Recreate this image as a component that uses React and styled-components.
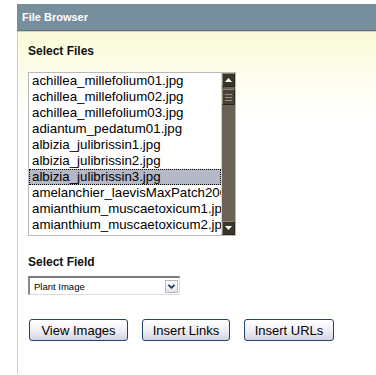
import React from "react"
import styled, { createGlobalStyle } from "styled-components"

const GlobalStyle = createGlobalStyle`
  html, body {
    margin: 0;
    padding: 0;
    background: #ffffff;
    font-family: "Liberation Sans", Arial, sans-serif;
  }
`

const Page = styled.div`
  padding: 4px 0 0 17px;
`

const Header = styled.div`
  height: 26px;
  line-height: 27px;
  padding-left: 5px;
  background: #778e9c;
  border-bottom: 1px solid #5f7380;
  color: #ffffff;
  font-size: 11px;
  font-weight: bold;
`

const Body = styled.div`
  min-height: 343px;
  box-sizing: border-box;
  border-left: 1px solid #d2ceb6;
  border-top: 1px solid #d4d0b4;
  padding: 12px 10px 0 10px;
  background: linear-gradient(to bottom, #fafad7 0, #fdfdee 45px, #ffffff 90px);
`

const Label = styled.div`
  font-size: 12px;
  line-height: 14px;
  font-weight: bold;
  color: #111111;
  margin-top: ${(p) => p.$top || 0}px;
`

const ListBox = styled.div`
  display: flex;
  width: 208px;
  height: 164px;
  box-sizing: border-box;
  margin-top: 14px;
  border: 1px solid #b9b9b9;
  background: #ffffff;
`

const Rows = styled.div`
  flex: 1;
  overflow: hidden;
`

const Row = styled.div`
  height: 16px;
  line-height: 16px;
  padding-left: 3px;
  font-size: 13.3px;
  color: #000000;
  white-space: nowrap;
  box-sizing: border-box;
  background: ${(p) => (p.$selected ? "#b5b8c6" : "transparent")};
  outline: ${(p) => (p.$selected ? "1px dotted #000" : "none")};
  outline-offset: -1px;
`

const ScrollBar = styled.div`
  width: 13px;
  display: flex;
  flex-direction: column;
  background: #6a6254;
  border-left: 1px solid #d8d4c8;
`

const ArrowButton = styled.div`
  height: 14px;
  display: flex;
  align-items: center;
  justify-content: center;
  background: #3b3429;
  border: 1px solid #8c8474;
  border-right-color: #2a251d;
  border-bottom-color: #2a251d;
  box-sizing: border-box;
`

const Thumb = styled.div`
  height: 16px;
  margin-top: 2px;
  box-sizing: border-box;
  background: #4a4236;
  border: 1px solid #8c8474;
  border-right-color: #2a251d;
  border-bottom-color: #2a251d;
  display: flex;
  flex-direction: column;
  justify-content: center;
  gap: 2px;
  padding: 0 2px;
`

const Grip = styled.div`
  height: 1px;
  background: #9a9282;
`

const Track = styled.div`
  flex: 1;
`

const SelectBox = styled.div`
  display: flex;
  align-items: center;
  width: 152px;
  height: 19px;
  box-sizing: border-box;
  margin-top: 7px;
  border-top: 2px solid #7a7a7a;
  border-left: 2px solid #8a8a8a;
  border-right: 1px solid #dcdcdc;
  border-bottom: 1px solid #dcdcdc;
  background: #ffffff;
`

const SelectText = styled.div`
  flex: 1;
  padding-left: 4px;
  font-size: 9.5px;
  color: #000000;
`

const DropButton = styled.div`
  width: 13px;
  height: 13px;
  margin-right: 1px;
  box-sizing: border-box;
  display: flex;
  align-items: center;
  justify-content: center;
  background: linear-gradient(to bottom, #ffffff, #e2e2e8);
  border: 1px solid #b8b8c4;
`

const Buttons = styled.div`
  display: flex;
  gap: 14px;
  margin-top: 24px;
  padding-left: 1px;
`

const Button = styled.button`
  width: ${(p) => p.$w}px;
  height: 22px;
  padding: 0;
  border: 1px solid #22436f;
  border-radius: 3px;
  background: linear-gradient(to bottom, #ffffff 0%, #f2f2f6 45%, #d3d3e3 100%);
  font-family: "Liberation Sans", Arial, sans-serif;
  font-size: 13px;
  color: #000000;
  cursor: pointer;
`

const files = [
  "achillea_millefolium01.jpg",
  "achillea_millefolium02.jpg",
  "achillea_millefolium03.jpg",
  "adiantum_pedatum01.jpg",
  "albizia_julibrissin1.jpg",
  "albizia_julibrissin2.jpg",
  "albizia_julibrissin3.jpg",
  "amelanchier_laevisMaxPatch2002.jpg",
  "amianthium_muscaetoxicum1.jpg",
  "amianthium_muscaetoxicum2.jpg",
]

const App = () => {
  return (
    <>
      <GlobalStyle />
      <Page>
        <Header>File Browser</Header>
        <Body>
          <Label>Select Files</Label>
          <ListBox>
            <Rows>
              {files.map((f, i) => (
                <Row key={f} $selected={i === 6}>
                  {f}
                </Row>
              ))}
            </Rows>
            <ScrollBar>
              <ArrowButton>
                <svg width="7" height="4" viewBox="0 0 7 4">
                  <polygon points="3.5,0 7,4 0,4" fill="#ffffff" />
                </svg>
              </ArrowButton>
              <Thumb>
                <Grip />
                <Grip />
                <Grip />
              </Thumb>
              <Track />
              <ArrowButton>
                <svg width="7" height="4" viewBox="0 0 7 4">
                  <polygon points="0,0 7,0 3.5,4" fill="#ffffff" />
                </svg>
              </ArrowButton>
            </ScrollBar>
          </ListBox>
          <Label $top={19}>Select Field</Label>
          <SelectBox>
            <SelectText>Plant Image</SelectText>
            <DropButton>
              <svg width="7" height="5" viewBox="0 0 7 5">
                <polyline points="0.5,0.8 3.5,3.8 6.5,0.8" fill="none" stroke="#1c2f55" strokeWidth="1.6" />
              </svg>
            </DropButton>
          </SelectBox>
          <Buttons>
            <Button $w={99}>View Images</Button>
            <Button $w={88}>Insert Links</Button>
            <Button $w={90}>Insert URLs</Button>
          </Buttons>
        </Body>
      </Page>
    </>
  )
}

export default App
